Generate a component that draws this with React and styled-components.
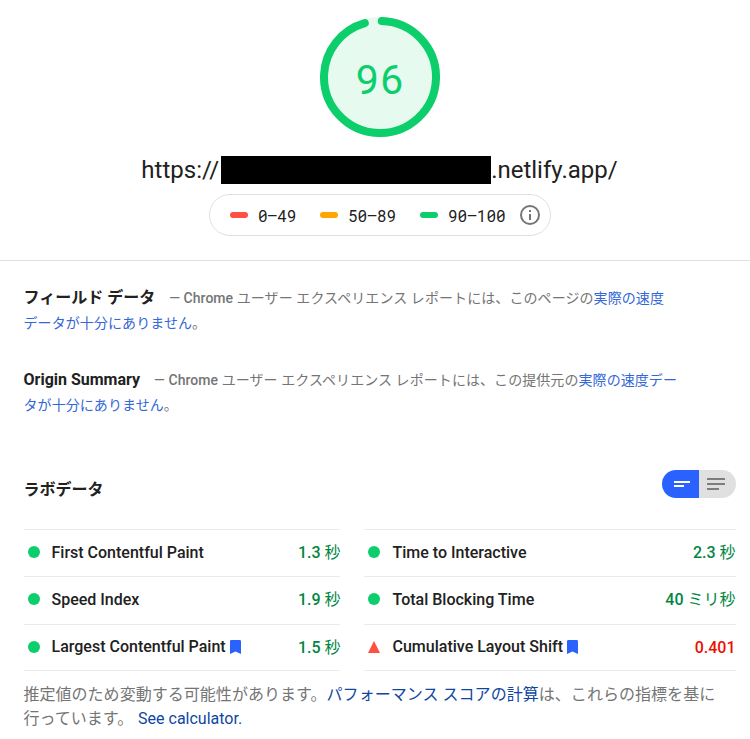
import React from "react";
import styled, { createGlobalStyle } from "styled-components";

const Global = createGlobalStyle`
  * { box-sizing: border-box; }
  body { margin: 0; background: #fff; color: #212121; font-family: Roboto, "Noto Sans CJK JP", sans-serif; }
`;
const Page = styled.main`height: 739px; overflow: hidden;`;
const Header = styled.header`
  height: 261px; border-bottom: 1px solid #e0e0e0; padding: 17px 0 0 10px;
  display: flex; flex-direction: column; align-items: center;
`;
const Gauge = styled.div`display: grid; width: 120px; height: 120px; place-items: center;`;
const GaugeSvg = styled.svg`grid-area: 1 / 1; display: block; width: 120px; height: 120px;`;
const Score = styled.span`
  grid-area: 1 / 1; padding-top: 2px; color: #0cce6b; font-size: 41px; line-height: 48px; letter-spacing: 0.6px;
  font-family: "Roboto Mono", Roboto, sans-serif;
`;
const Url = styled.div`
  display: flex; align-items: center; height: 28px; margin: 19px 1px 0 0; font-size: 24px; white-space: nowrap;
`;
const Redaction = styled.span`width: 270px; height: 28px; background: #000; margin-left: 2px;`;
const Legend = styled.div`
  width: 342px; height: 42px; margin-top: 10px; border: 1px solid #e0e0e0; border-radius: 21px;
  display: flex; align-items: center; padding-left: 20px; font: 16px "Roboto Mono", "DejaVu Sans Mono", monospace;
`;
const Range = styled.span`
  display: flex; align-items: center; width: ${p => p.$w}px; white-space: nowrap;
  &::before { content: ""; width: 18px; height: 6px; border-radius: 3px; background: ${p => p.$c}; margin-right: 10px; }
`;
const InfoIcon = styled.svg`width: 20px; height: 20px;`;
const Fields = styled.div`padding-top: 24px;`;
const Field = styled.section`
  padding-left: 23.5px; height: 82px; font-size: 14px; line-height: 25px; color: #757575; white-space: nowrap;
`;
const Name = styled.strong`font-size: 16px; font-weight: 700; color: #212121; margin-right: 14px;`;
const Med = styled.span`font-weight: 500; letter-spacing: 0.05px;`;
const Jp = styled.span`font-weight: 400; letter-spacing: ${p => p.$ls || 0}px;`;
const Link = styled.a`color: ${p => p.$deep ? "#0d47a1" : "#3367d6"};`;
const LabHeader = styled.div`
  display: flex; justify-content: space-between; align-items: flex-start; height: 59px; margin: 21px 14px 0 23.5px;
`;
const LabTitle = styled.h2`margin: 8px 0 0; font-size: 16px; line-height: 24px; font-weight: 700;`;
const Toggle = styled.div`display: flex; width: 74px; height: 28px; border-radius: 14px; overflow: hidden;`;
const Choice = styled.span`
  width: 37px; background: ${p => p.$on ? "#2962ff" : "#e0e0e0"}; color: ${p => p.$on ? "#fff" : "#7d7d7d"};
`;
const ChoiceIcon = styled.svg`display: block; width: 37px; height: 28px;`;
const Metrics = styled.div`
  display: grid; grid-template-columns: 316px 372px; grid-template-rows: 47px 48px 47px; column-gap: 24px; margin-left: 24px;
`;
const Metric = styled.div`
  border-top: 1px solid #ebebeb; display: flex; align-items: flex-start; padding-top: ${p => p.$core ? 10 : 11}px;
  font-size: 16px; line-height: 24px; font-weight: 500; white-space: nowrap;
  &:nth-child(even) { padding-right: 1px; }
  &:nth-child(even) > svg:first-child { margin-right: 12.5px; }
  &:nth-last-child(-n + 2) { border-bottom: 1px solid #ebebeb; }
`;
const Mark = styled.svg`width: 12px; height: 12px; margin: ${p => p.$low ? 6 : 5}px 11.5px 0 4px; flex: none;`;
const Flag = styled.svg`width: 11px; height: 14px; margin: 5px 0 0 4px;`;
const Value = styled.span`
  margin-left: auto; margin-right: -0.5px; padding-top: ${p => p.$low ? 1 : 0}px; color: ${p => p.$bad ? "#eb0f00" : "#018642"};
`;
const Footer = styled.p`
  margin: 0 0 0 23.4px; padding-top: 12px; font-size: 16px; line-height: 24px; color: #757575; white-space: nowrap;
`;
const Calculator = styled(Link)`margin-left: 0.8px;`;

const metrics = [
  { name: "First Contentful Paint", value: "1.3", unit: " 秒" },
  { name: "Time to Interactive", value: "2.3", unit: " 秒" },
  { name: "Speed Index", value: "1.9", unit: " 秒" },
  { name: "Total Blocking Time", value: "40", unit: " ミリ秒" },
  { name: "Largest Contentful Paint", value: "1.5", unit: " 秒", core: true },
  { name: "Cumulative Layout Shift", value: "0.401", unit: "", core: true, bad: true },
];

export default function App() {
  return (
    <Page>
      <Global />
      <Header>
        <Gauge>
          <GaugeSvg viewBox="0 0 120 120">
            <circle cx="60" cy="60" r="60" fill="#e6faf0" />
            <circle cx="60" cy="60" r="56" fill="none" stroke="#0cce6b" strokeWidth="8" strokeLinecap="round"
              strokeDasharray="334 351.86" transform="rotate(1.9 60 60) rotate(-90 60 60)" />
          </GaugeSvg>
          <Score>96</Score>
        </Gauge>
        <Url>https://<Redaction />.netlify.app/</Url>
        <Legend>
          <Range $w={90} $c="#ff4e42">0–49</Range>
          <Range $w={100} $c="#ffa400">50–89</Range>
          <Range $w={100} $c="#0cce6b">90–100</Range>
          <InfoIcon viewBox="0 0 20 20">
            <circle cx="10" cy="10" r="9" fill="none" stroke="#757575" strokeWidth="2" />
            <path d="M9 5h2v2H9zM9 9h2v6H9z" fill="#757575" />
          </InfoIcon>
        </Legend>
      </Header>
      <Fields>
        <Field>
          <Name>フィールド データ</Name><Med>— Chrome</Med>
          <Jp $ls={0.08}> ユーザー エクスペリエンス レポートには、このページの<Link>実際の速度<br />データが十分にありません</Link>。</Jp>
        </Field>
        <Field>
          <Name>Origin Summary</Name><Med>— Chrome</Med>
          <Jp $ls={0.07}> ユーザー エクスペリエンス レポートには、この提供元の<Link>実際の速度デー<br />タが十分にありません</Link>。</Jp>
        </Field>
      </Fields>
      <LabHeader>
        <LabTitle>ラボデータ</LabTitle>
        <Toggle>
          <Choice $on><ChoiceIcon viewBox="0 0 37 28"><path d="M12 11h16v2H12zM12 15h10v2H12z" fill="currentColor" /></ChoiceIcon></Choice>
          <Choice><ChoiceIcon viewBox="0 0 37 28"><path d="M8 8h18v2H8zM8 13h18v2H8zM8 18h12v2H8z" fill="currentColor" /></ChoiceIcon></Choice>
        </Toggle>
      </LabHeader>
      <Metrics>
        {metrics.map(m => (
          <Metric key={m.name} $core={m.core}>
            <Mark viewBox="0 0 12 12" $low={m.core}>
              {m.bad ? <path d="M6 0l6 12H0z" fill="#ff4e42" /> : <circle cx="6" cy="6" r="6" fill="#0cce6b" />}
            </Mark>
            {m.name}
            {m.core && <Flag viewBox="0 0 11 14"><path d="M0 1.3Q0 0 1.3 0h8.4Q11 0 11 1.3V14L5.5 11.6 0 14z" fill="#2962ff" /></Flag>}
            <Value $bad={m.bad} $low={m.core}>{m.value}<Jp>{m.unit}</Jp></Value>
          </Metric>
        ))}
      </Metrics>
      <Footer>
        <Jp $ls={0.04}>推定値のため変動する可能性があります。<Link $deep>パフォーマンス スコアの計算</Link>は、これらの指標を基に<br />行っています。 </Jp>
        <Calculator $deep>See calculator.</Calculator>
      </Footer>
    </Page>
  );
}
